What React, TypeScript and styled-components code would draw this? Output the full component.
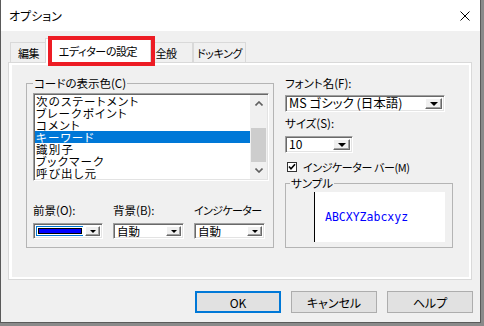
import React from 'react';
import styled, { createGlobalStyle } from 'styled-components';

const ui = `"Noto Sans CJK JP", "Noto Sans", sans-serif`;

const GlobalStyle = createGlobalStyle`
  html, body { margin: 0; padding: 0; background: #8a8a8a; }
  body { width: 484px; height: 326px; overflow: hidden; }
`;

const Window = styled.div`
  position: relative;
  width: 479px;
  height: 322px;
  border: 1px solid #5a5a5a;
  border-top: none;
  background: #f0f0f0;
  display: flex;
  flex-direction: column;
  font-family: ${ui};
  font-size: 12px;
  color: #000;
  font-feature-settings: 'palt';
`;

const TitleBar = styled.div`
  height: 31px;
  background: #fff;
  display: flex;
  align-items: center;
  padding: 0 10px 0 8px;
`;

const Title = styled.span`
  font-size: 12px;
  line-height: 14px;
`;

const CloseButton = styled.div`
  margin-left: auto;
  width: 10px;
  height: 10px;
  display: flex;
`;

const Body = styled.div`
  flex: 1;
  display: flex;
  flex-direction: column;
  padding: 5px 8px 0 7px;
`;

const TabStrip = styled.div`
  height: 26px;
  display: flex;
  align-items: flex-end;
  padding-left: 2px;
  position: relative;
  z-index: 1;
`;

const Tab = styled.div<{ $active?: boolean; $width: number; $shift?: number }>`
  box-sizing: border-box;
  width: ${p => p.$width + (p.$active ? 4 : 0)}px;
  height: ${p => (p.$active ? '25px' : '20px')};
  margin: ${p => (p.$active ? '0 -2px -1px' : '0')};
  padding-top: ${p => (p.$active ? '4px' : '2px')};
  padding-right: ${p => p.$shift ?? 0}px;
  border: 1px solid #d9d9d9;
  border-bottom: none;
  background: ${p => (p.$active ? '#fff' : '#f0f0f0')};
  position: relative;
  z-index: ${p => (p.$active ? 2 : 1)};
  font-size: 11px;
  letter-spacing: -0.4px;
  line-height: 16px;
  text-align: center;
  white-space: nowrap;
`;

const Highlight = styled.div`
  position: absolute;
  left: 47px;
  top: 36px;
  width: 107px;
  height: 30px;
  box-sizing: border-box;
  border: 4px solid #ed1c24;
  z-index: 5;
`;

const Panel = styled.div`
  box-sizing: border-box;
  height: 218px;
  border: 1px solid #d9d9d9;
  background: #fff;
  padding: 2px 2px 2px 3px;
  display: flex;
`;

const Page = styled.div`
  flex: 1;
  background: #f0f0f0;
  display: flex;
  align-items: flex-start;
  padding: 12px 0 0 14px;
`;

const Group = styled.fieldset<{ $width: number; $height: number }>`
  box-sizing: border-box;
  width: ${p => p.$width}px;
  height: ${p => p.$height}px;
  margin: 0;
  padding: 0 4px 0 6px;
  border: 1px solid #b4b4b4;
  min-width: 0;
  display: flex;
  flex-direction: column;
`;

const Legend = styled.legend`
  padding: 0 1px;
  font-size: 11.5px;
  line-height: 12px;
`;

const ListBox = styled.div`
  margin-top: 4px;
  width: 236px;
  height: 88px;
  box-sizing: border-box;
  border: 1px solid;
  border-color: #a0a0a0 #fff #fff #a0a0a0;
  box-shadow: inset 1px 1px 0 #696969, inset -1px -1px 0 #e3e3e3;
  background: #fff;
  padding: 1px;
  display: flex;
`;

const ListItems = styled.div`
  flex: 1;
  display: flex;
  flex-direction: column;
`;

const ListItem = styled.div<{ $selected?: boolean }>`
  height: 12px;
  line-height: 12px;
  font-size: 11.5px;
  letter-spacing: 1.2px;
  padding-left: 1px;
  white-space: nowrap;
  background: ${p => (p.$selected ? '#0078d7' : 'transparent')};
  color: ${p => (p.$selected ? '#fff' : '#000')};
`;

const ScrollBar = styled.div`
  width: 17px;
  background: #f0f0f0;
  display: flex;
  flex-direction: column;
`;

const ScrollArrow = styled.div`
  height: 17px;
  display: flex;
  align-items: center;
  justify-content: center;
`;

const ScrollTrack = styled.div`
  flex: 1;
  display: flex;
  flex-direction: column;
`;

const ScrollThumb = styled.div`
  margin: 16px 1px 0;
  height: 34px;
  background: #cdcdcd;
`;

const ColorGrid = styled.div`
  display: grid;
  grid-template-columns: 70px 71px 71px;
  column-gap: 10px;
  row-gap: 6px;
  margin-top: 22px;
`;

const FieldLabel = styled.div<{ $lh?: number; $tight?: boolean }>`
  font-size: ${p => (p.$tight ? 11 : 11.5)}px;
  letter-spacing: ${p => (p.$tight ? '-0.6px' : '0')};
  line-height: ${p => p.$lh ?? 14}px;
  white-space: nowrap;
`;

const Combo = styled.div<{ $width?: number; $height: number }>`
  box-sizing: border-box;
  width: ${p => (p.$width ? `${p.$width}px` : 'auto')};
  height: ${p => p.$height}px;
  border: 1px solid;
  border-color: #a0a0a0 #fff #fff #a0a0a0;
  box-shadow: inset 1px 1px 0 #696969, inset -1px -1px 0 #e3e3e3;
  background: #fff;
  padding: 1px;
  display: flex;
  align-items: stretch;
`;

const ComboValue = styled.div<{ $size?: number }>`
  flex: 1;
  min-width: 0;
  padding-left: 2px;
  font-size: ${p => p.$size ?? 11.5}px;
  line-height: 12px;
  white-space: nowrap;
`;

const ColorValue = styled.div`
  flex: 1;
  margin: 1px;
  background: #0078d7;
  display: flex;
  align-items: center;
  padding: 0 1px 0 2px;
`;

const ColorBar = styled.div<{ $color: string }>`
  flex: 1;
  height: 4px;
  background: ${p => p.$color};
  border: 1px solid #000;
  outline: 1px solid #fff;
`;

const ComboButton = styled.div<{ $width: number }>`
  box-sizing: border-box;
  width: ${p => p.$width}px;
  margin: 1px;
  background: #f0f0f0;
  border: 1px solid;
  border-color: #fff #696969 #696969 #fff;
  box-shadow: inset -1px -1px 0 #a0a0a0;
  display: flex;
  align-items: center;
  justify-content: center;
`;

const Arrow = styled.div<{ $size: number }>`
  width: 0;
  height: 0;
  margin-top: 1px;
  border-left: ${p => p.$size}px solid transparent;
  border-right: ${p => p.$size}px solid transparent;
  border-top: ${p => p.$size}px solid #000;
`;

const RightColumn = styled.div`
  margin-left: 11px;
  width: 168px;
  display: flex;
  flex-direction: column;
  align-items: flex-start;
`;

const Spacer = styled.div<{ $h: number }>`
  height: ${p => p.$h}px;
`;

const CheckRow = styled.div`
  display: flex;
  align-items: center;
  height: 12px;
  padding-left: 2px;
`;

const CheckBox = styled.div`
  box-sizing: border-box;
  width: 10px;
  height: 10px;
  border: 1px solid #333;
  background: #fff;
  display: flex;
  align-items: center;
  justify-content: center;
`;

const CheckLabel = styled.span`
  margin-left: 6px;
  font-size: 11px;
  letter-spacing: -0.4px;
  line-height: 12px;
  white-space: nowrap;
`;

const SampleBox = styled.div`
  margin: 3px 0 0 3px;
  width: 152px;
  height: 50px;
  display: flex;
`;

const Gutter = styled.div`
  width: 21px;
  background: #f0f0f0;
  border-right: 1px solid #000;
`;

const SampleCode = styled.div`
  flex: 1;
  background: #fff;
  display: flex;
  align-items: center;
  padding-left: 10px;
  font-family: "DejaVu Sans Mono", "Liberation Mono", monospace;
  font-size: 11.5px;
  color: #0000ff;
`;

const ButtonRow = styled.div`
  display: flex;
  justify-content: flex-end;
  gap: 10px;
  margin: 11px -1px 0 0;
`;

const Button = styled.div<{ $primary?: boolean }>`
  box-sizing: border-box;
  width: 86px;
  height: 22px;
  background: #e1e1e1;
  border: ${p => (p.$primary ? '2px solid #0078d7' : '1px solid #adadad')};
  display: flex;
  align-items: center;
  justify-content: center;
  font-size: 12px;
`;

const Chevron = ({ up }: { up?: boolean }) => (
  <svg width="8" height="5" viewBox="0 0 8 5">
    <polyline
      points={up ? '0.5,4.5 4,1 7.5,4.5' : '0.5,0.5 4,4 7.5,0.5'}
      fill="none"
      stroke="#606060"
      strokeWidth="1.6"
    />
  </svg>
);

const DropCombo = ({
  width,
  height = 16,
  buttonWidth = 15,
  arrow = 3,
  children,
}: {
  width?: number;
  height?: number;
  buttonWidth?: number;
  arrow?: number;
  children: React.ReactNode;
}) => (
  <Combo $width={width} $height={height}>
    {children}
    <ComboButton $width={buttonWidth}>
      <Arrow $size={arrow} />
    </ComboButton>
  </Combo>
);

const listItems = [
  '次のステートメント',
  'ブレークポイント',
  'コメント',
  'キーワード',
  '識別子',
  'ブックマーク',
  '呼び出し元',
];

const tabs = [
  { label: '編集', width: 37 },
  { label: 'エディターの設定', width: 102 },
  { label: '全般', width: 44, shift: 10 },
  { label: 'ドッキング', width: 53 },
];

const App = () => {
  const selectedItem = 3;
  return (
    <>
      <GlobalStyle />
      <Window>
        <TitleBar>
          <Title>オプション</Title>
          <CloseButton>
            <svg width="10" height="10" viewBox="0 0 10 10">
              <path d="M0.5 0.5 L9.5 9.5 M9.5 0.5 L0.5 9.5" stroke="#000" strokeWidth="1" />
            </svg>
          </CloseButton>
        </TitleBar>
        <Body>
          <TabStrip>
            {tabs.map((t, i) => (
              <Tab key={t.label} $active={i === 1} $width={t.width} $shift={t.shift}>
                {t.label}
              </Tab>
            ))}
          </TabStrip>
          <Panel>
            <Page>
              <Group $width={248} $height={171}>
                <Legend>コードの表示色(C)</Legend>
                <ListBox>
                  <ListItems>
                    {listItems.map((item, i) => (
                      <ListItem key={item} $selected={i === selectedItem}>
                        {item}
                      </ListItem>
                    ))}
                  </ListItems>
                  <ScrollBar>
                    <ScrollArrow>
                      <Chevron up />
                    </ScrollArrow>
                    <ScrollTrack>
                      <ScrollThumb />
                    </ScrollTrack>
                    <ScrollArrow>
                      <Chevron />
                    </ScrollArrow>
                  </ScrollBar>
                </ListBox>
                <ColorGrid>
                  <FieldLabel>前景(O):</FieldLabel>
                  <FieldLabel>背景(B):</FieldLabel>
                  <FieldLabel $tight>インジケーター</FieldLabel>
                  <DropCombo>
                    <ColorValue>
                      <ColorBar $color="#0000ff" />
                    </ColorValue>
                  </DropCombo>
                  <DropCombo>
                    <ComboValue>自動</ComboValue>
                  </DropCombo>
                  <DropCombo>
                    <ComboValue>自動</ComboValue>
                  </DropCombo>
                </ColorGrid>
              </Group>
              <RightColumn>
                <FieldLabel $lh={12}>フォント名(F):</FieldLabel>
                <Spacer $h={6} />
                <DropCombo width={160} height={17} buttonWidth={17} arrow={4}>
                  <ComboValue $size={12.5}>MS ゴシック (日本語)</ComboValue>
                </DropCombo>
                <Spacer $h={5} />
                <FieldLabel $lh={12}>サイズ(S):</FieldLabel>
                <Spacer $h={7} />
                <DropCombo width={68} height={17} buttonWidth={17} arrow={4}>
                  <ComboValue $size={12}>10</ComboValue>
                </DropCombo>
                <Spacer $h={8} />
                <CheckRow>
                  <CheckBox>
                    <svg width="8" height="8" viewBox="0 0 8 8">
                      <polyline points="1,3.5 3,5.8 7,1.2" fill="none" stroke="#000" strokeWidth="1.6" />
                    </svg>
                  </CheckBox>
                  <CheckLabel>インジケーター バー(M)</CheckLabel>
                </CheckRow>
                <Spacer $h={4} />
                <Group $width={168} $height={71} style={{ padding: '0 4px' }}>
                  <Legend>サンプル</Legend>
                  <SampleBox>
                    <Gutter />
                    <SampleCode>ABCXYZabcxyz</SampleCode>
                  </SampleBox>
                </Group>
              </RightColumn>
            </Page>
          </Panel>
          <ButtonRow>
            <Button $primary>OK</Button>
            <Button>キャンセル</Button>
            <Button>ヘルプ</Button>
          </ButtonRow>
        </Body>
        <Highlight />
      </Window>
    </>
  );
};

export default App;
